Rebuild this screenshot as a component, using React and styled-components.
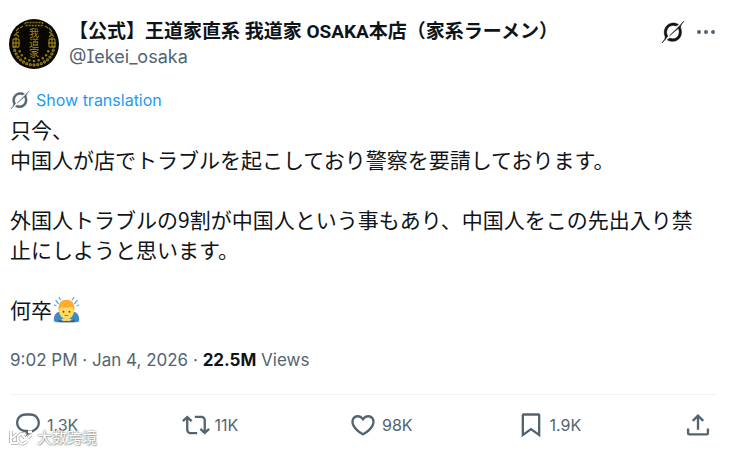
import React from 'react';
import styled, { createGlobalStyle } from 'styled-components';

const GlobalStyle = createGlobalStyle`
  * { box-sizing: border-box; }
  body {
    margin: 0;
    background: #fff;
    color: #0f1419;
    font-family: Inter, "Noto Sans CJK JP", sans-serif;
  }
  button { font: inherit; color: inherit; background: none; border: 0; padding: 0; cursor: pointer; }
  p, h1 { margin: 0; }
  svg { display: block; flex: none; }
`;

const Post = styled.article`
  padding: 18px 14px 12px 10px;
`;
const Header = styled.header`
  display: flex;
  align-items: flex-start;
  gap: 10px;
`;
const AvatarLink = styled.a`
  flex: none;
  margin-top: 1px;
  margin-left: -1px;
`;
const Author = styled.div`
  flex: 1;
  min-width: 0;
`;
const Name = styled.h1`
  padding-top: 1px;
  font-size: 19px;
  line-height: 26px;
  font-weight: 700;
  font-family: Roboto, "Noto Sans CJK JP", sans-serif;
  white-space: nowrap;
`;
const Handle = styled.a`
  display: block;
  font-size: 18px;
  line-height: 24px;
  font-feature-settings: "cv08" 1;
  color: #536471;
  text-decoration: none;
`;
const HeaderActions = styled.div`
  display: flex;
  align-items: center;
  gap: 10px;
  height: 28px;
`;
const IconButton = styled.button`
  display: flex;
  align-items: center;
  color: ${(p) => p.$color || '#536471'};
`;
const Translate = styled.button`
  display: flex;
  align-items: center;
  gap: 6px;
  margin-top: 20px;
  font-size: 16px;
  line-height: 22px;
  color: #536471;
`;
const LinkText = styled.span`
  color: #1d9bf0;
`;
const Body = styled.p`
  margin-top: 3px;
  padding-right: 8px;
  font-family: "Noto Sans CJK JP", sans-serif;
  font-size: 21px;
  line-height: 30px;
  white-space: pre-line;
`;
const Emoji = styled.span`
  display: inline-block;
  vertical-align: -5px;
  margin-left: 1px;
`;
const Meta = styled.div`
  padding: 23px 0 21px;
  border-bottom: 1px solid #eff3f4;
  font-size: 17px;
  line-height: 26px;
  color: #536471;
  strong { color: #0f1419; font-weight: 700; }
`;
const Footer = styled.footer`
  position: relative;
  display: flex;
  padding: 16px 5px 0 4px;
`;
const Action = styled.button`
  display: flex;
  flex: ${(p) => (p.$fixed ? 'none' : '1')};
  align-items: center;
  gap: 5px;
  color: #536471;
  font-size: 16px;
  line-height: 28px;
`;
const Watermark = styled.div`
  position: absolute;
  left: -2px;
  top: 32px;
  display: flex;
  align-items: center;
  gap: 2px;
  font-family: "Noto Sans CJK SC", sans-serif;
  font-size: 15px;
  line-height: 20px;
  color: #fff;
  text-shadow: 0 0 1px #888, 0 0 2px #999, 1px 1px 1px #bbb;
  pointer-events: none;
`;

const petals = Array.from({ length: 17 }, (_, i) => {
  const a = (Math.PI * (i + 0.5)) / 17;
  return [25 + Math.cos(a) * 20, 26 + Math.sin(a) * 20];
});
const innerPetals = Array.from({ length: 9 }, (_, i) => {
  const a = (Math.PI * (i + 1)) / 10;
  return [25 + Math.cos(a) * 15, 28 + Math.sin(a) * 14];
});

const Avatar = () => (
  <svg width="50" height="50" viewBox="0 0 50 50" role="img" aria-label="我道家">
    <circle cx="25" cy="25" r="25" fill="#080703" />
    <g fill="none" stroke="#8c7813" strokeWidth="1.3">
      <rect x="16" y="3.5" width="18" height="3" rx="1.5" strokeDasharray="2 1" />
      <path d="M7 12l3-3M11 9l3-2M36 7l3 2M40 9l3 4M7 14l3-1M40 13l3 2" />
      <path d="M5 17l2-2 3 3M40 18l3-3 2 3" />
      <rect x="4" y="20" width="6" height="8" rx="1" />
      <rect x="40" y="20" width="6" height="8" rx="1" />
      <path d="M3 24h8M7 18v10M39 24h8M43 18v10" />
      {petals.map(([x, y]) => <circle key={x} cx={x} cy={y} r="1" />)}
      {innerPetals.map(([x, y]) => <circle key={x} cx={x} cy={y} r=".7" />)}
    </g>
    <text
      x="25"
      y="9"
      fill="#a28a18"
      fontSize="10"
      fontFamily="Noto Sans CJK JP, sans-serif"
      writingMode="vertical-rl"
    >
      我道家
    </text>
  </svg>
);

const Grok = ({ size }) => (
  <svg width={size} height={size} viewBox="0 0 24 24" fill="currentColor" aria-hidden="true">
    <g stroke="currentColor" strokeWidth=".5" strokeLinejoin="round">
      <path d="M1 23C3 20 4.700 18.700 4 16.200C1.500 10.500 5 3.500 11.500 3C14 2.800 16 3.500 17.500 4.500L15.200 6.100C11.500 4.500 7.700 6 6.300 9.200C5.300 11.500 5.500 14 6.800 16.200Q4.500 19.500 1 23Z" />
      <path d="M8.500 15.800L17 7.500L23 1C20.500 4.300 19 5.500 20 9C22 15.500 18 20.800 12.500 21.300C10 21.500 8 20.900 6.300 19.800L8.800 18.100C12.700 20 16.500 18 17.700 14.500C18.500 12.300 18.300 10 17.200 8.500Z" />
    </g>
  </svg>
);

const More = () => (
  <svg width="22" height="22" viewBox="0 0 22 22" fill="currentColor" aria-hidden="true">
    <circle cx="4" cy="11" r="2" /><circle cx="11" cy="11" r="2" /><circle cx="18" cy="11" r="2" />
  </svg>
);

const Bowing = () => (
  <svg width="27" height="27" viewBox="0 0 36 36" role="img" aria-label="person bowing">
    <path d="M1 32c0-6 3-11 8-11h18c5 0 8 5 8 11 0 2-2 3-4 3H5c-2 0-4-1-4-3z" fill="#4289c1" />
    <ellipse cx="18" cy="20" rx="10" ry="11" fill="#ffdc5d" />
    <path d="M8 21C5.500 11 10 5 18 5s12.500 6 10 16c-1-3-1.500-5-3.500-6-4 1-9 1-13 0-2 1-2.500 3-3.500 6z" fill="#ffac33" />
    <circle cx="14" cy="21" r="1.200" fill="#664500" />
    <circle cx="22" cy="21" r="1.200" fill="#664500" />
    <path d="M15.500 26h5" fill="none" stroke="#c1694f" strokeWidth="1.300" />
    <path d="M11 31q3.500-2 7 0 3.500-2 7 0l-2 3H13z" fill="#ffdc5d" />
    <path d="M6 31q6 3 12 2 6 1 12-2l-2 4H8z" fill="#2a6797" />
    <path d="M4 6l3 4M8 2l2 3M2 12l2 1M32 6l-3 4M28 2l-2 3M34 12l-2 1" stroke="#5dadec" strokeWidth="1.800" strokeLinecap="round" />
  </svg>
);

const icons = {
  reply: 'M1.751 10c0-4.42 3.584-8 8.005-8h4.366c4.49 0 8.129 3.64 8.129 8.13 0 2.96-1.607 5.68-4.196 7.11l-8.054 4.46v-3.690h-.067c-4.490.1-8.183-3.510-8.183-8.010zm8.005-6c-3.317 0-6.005 2.690-6.005 6 0 3.370 2.770 6.080 6.138 6.010l.351-.010h1.761v2.300l5.087-2.810c1.951-1.080 3.163-3.130 3.163-5.360 0-3.390-2.744-6.130-6.129-6.130H9.756z',
  repost: 'M4.500 3.880l4.432 4.140-1.364 1.460L5.500 7.550V16c0 1.100.896 2 2 2H13v2H7.500c-2.209 0-4-1.790-4-4V7.550L1.432 9.480.068 8.020 4.500 3.880zM16.500 6H11V4h5.500c2.209 0 4 1.790 4 4v8.450l2.068-1.930 1.364 1.460-4.432 4.140-4.432-4.140 1.364-1.460 2.068 1.930V8c0-1.100-.896-2-2-2z',
  like: 'M16.697 5.500c-1.222-.060-2.679.510-3.890 2.160l-.805 1.090-.806-1.090C9.984 6.010 8.526 5.440 7.304 5.500c-1.243.070-2.349.780-2.910 1.910-.552 1.120-.633 2.780.479 4.820 1.074 1.970 3.257 4.270 7.129 6.610 3.870-2.340 6.052-4.640 7.126-6.610 1.111-2.040 1.030-3.700.477-4.820-.561-1.130-1.666-1.840-2.908-1.910zm4.187 7.690c-1.351 2.480-4.001 5.120-8.379 7.670l-.503.300-.504-.300c-4.379-2.550-7.029-5.190-8.382-7.670-1.360-2.500-1.410-4.860-.514-6.670.887-1.790 2.647-2.910 4.601-3.010 1.651-.090 3.368.560 4.798 2.010 1.429-1.450 3.146-2.100 4.796-2.010 1.954.100 3.714 1.220 4.601 3.010.896 1.810.846 4.170-.514 6.670z',
  bookmark: 'M4 3.500Q4 2 5.500 2h13Q20 2 20 3.500v19l-8-5.700-8 5.700zM6 4v14.700l6-4.300 6 4.300V4z',
  share: 'M12 2.590l5.200 5.200-1.410 1.410L13 6.410V16h-2V6.410L8.210 9.200 6.800 7.790zM21.500 15v4Q21.500 21 19.500 21h-15Q2.500 21 2.500 19v-4h2v4h15v-4z',
};

const Icon = ({ name }) => (
  <svg width="28" height="28" viewBox="0 0 24 24" fill="currentColor" aria-hidden="true">
    <path d={icons[name]} />
  </svg>
);

const stats = [
  { name: 'reply', label: 'Reply', count: '1.3K' },
  { name: 'repost', label: 'Repost', count: '11K' },
  { name: 'like', label: 'Like', count: '98K' },
  { name: 'bookmark', label: 'Bookmark', count: '1.9K' },
  { name: 'share', label: 'Share' },
];

const markPath = 'M3 2v12M3 14h7M9 5l-5 4M18 6a5 5 0 1 0 1 6M14 6l3 3M20 3h4M20 9l3-3';

export default function App() {
  return (
    <>
      <GlobalStyle />
      <Post>
        <Header>
          <AvatarLink href="#profile"><Avatar /></AvatarLink>
          <Author>
            <Name>【公式】王道家直系 我道家 OSAKA本店（家系ラーメン）</Name>
            <Handle href="#profile">@Iekei_osaka</Handle>
          </Author>
          <HeaderActions>
            <IconButton aria-label="Grok" $color="#0f1419"><Grok size={24} /></IconButton>
            <IconButton aria-label="More"><More /></IconButton>
          </HeaderActions>
        </Header>
        <Translate><Grok size={20} /><LinkText>Show translation</LinkText></Translate>
        <Body>
          {'只今、\n中国人が店でトラブルを起こしており警察を要請しております。\n\n外国人トラブルの9割が中国人という事もあり、中国人をこの先出入り禁止にしようと思います。\n\n何卒'}
          <Emoji><Bowing /></Emoji>
        </Body>
        <Meta>9:02 PM · Jan 4, 2026 · <strong>22.5M</strong> Views</Meta>
        <Footer>
          {stats.map((s) => (
            <Action key={s.name} aria-label={s.label} $fixed={!s.count}>
              <Icon name={s.name} />
              {s.count && <span>{s.count}</span>}
            </Action>
          ))}
          <Watermark>
            <svg width="27" height="17" viewBox="0 0 27 17" fill="none" aria-hidden="true">
              <path d={markPath} stroke="#aaa" strokeWidth="3.500" />
              <path d={markPath} stroke="#fff" strokeWidth="2" />
            </svg>
            <span>大数跨境</span>
          </Watermark>
        </Footer>
      </Post>
    </>
  );
}
